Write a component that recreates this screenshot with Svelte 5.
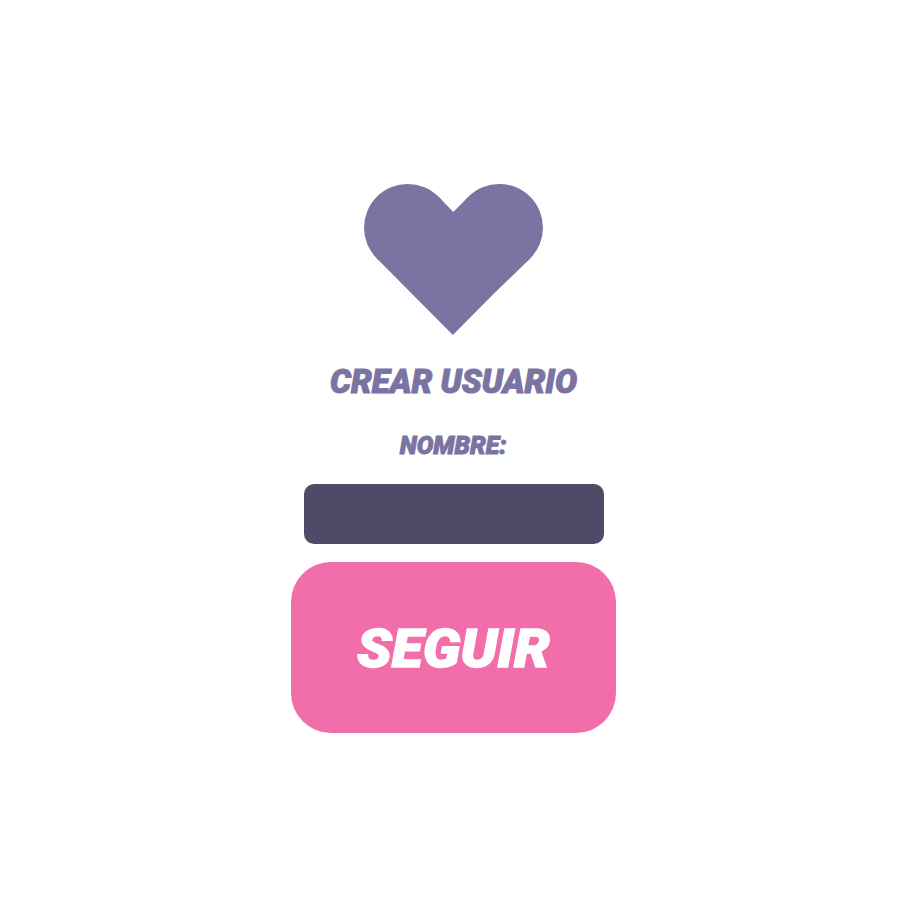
<script>
  let name = $state('');
</script>

<main>
  <svg class="heart" viewBox="0 0 180 151" aria-hidden="true">
    <circle cx="43.7" cy="43.6" r="43.7" />
    <circle cx="135.3" cy="43.6" r="43.7" />
    <path d="M12.8 74.5L74.6 12.7L89.3 28L104.4 12.7L135 43.6L166.2 74.5L128 111.5L88.9 151Z" />
  </svg>
  <h1>
    <svg width="260" height="40" viewBox="0 0 260 40">
      <text x="8" y="32.2" font-size="33.5" stroke-width="1.1" textLength="247" lengthAdjust="spacingAndGlyphs">CREAR USUARIO</text>
    </svg>
  </h1>
  <label for="name">
    <svg width="120" height="30" viewBox="0 0 120 30">
      <text x="7.7" y="23.7" font-size="25.6" stroke-width="1" textLength="107" lengthAdjust="spacingAndGlyphs">NOMBRE:</text>
    </svg>
  </label>
  <input id="name" type="text" bind:value={name} />
  <button type="button">
    <svg width="205" height="60" viewBox="0 0 205 60">
      <text x="6" y="49.8" font-size="53.5" stroke-width="1.4" textLength="193" lengthAdjust="spacingAndGlyphs">SEGUIR</text>
    </svg>
  </button>
</main>

<style>
  :global(body) {
    margin: 0;
    background: #fff;
  }
  main {
    box-sizing: border-box;
    height: 904px;
    padding-top: 184px;
    display: flex;
    flex-direction: column;
    align-items: center;
    color: #7b74a2;
    overflow: hidden;
  }
  svg {
    display: block;
    flex: none;
    fill: currentColor;
    overflow: visible;
  }
  text {
    font-family: Roboto, "Liberation Sans", sans-serif;
    font-weight: 900;
    font-style: italic;
    stroke: currentColor;
  }
  .heart {
    width: 180px;
    height: 151px;
    margin-left: 4px;
  }
  h1 {
    margin: 25.5px 0 0;
  }
  label {
    margin-top: 29.5px;
  }
  input {
    box-sizing: border-box;
    width: 300px;
    height: 60px;
    margin: 24px 0 18px 4px;
    padding: 0 16px;
    border: 0;
    border-radius: 10px;
    background: #4f4a67;
    color: #fff;
    font: italic 900 24px Roboto, sans-serif;
    outline: none;
  }
  button {
    display: flex;
    justify-content: center;
    box-sizing: border-box;
    width: 325px;
    height: 171px;
    margin-left: 3px;
    padding: 55px 0 0;
    align-items: flex-start;
    border: 0;
    border-radius: 40px;
    background: #f16eaa;
    color: #fff;
  }
</style>
